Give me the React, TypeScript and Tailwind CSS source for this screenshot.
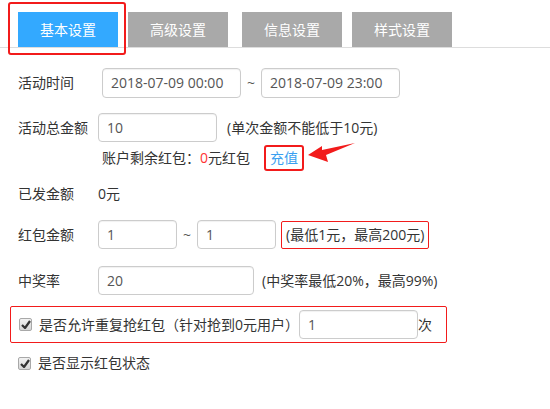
import React from "react"

const font = "font-[family-name:'Open_Sans','Noto_Sans_CJK_SC',sans-serif]"

function Field({ value, w, h = "h-[29px]" }: { value: string; w: string; h?: string }) {
  return (
    <div
      className={`${w} ${h} flex items-center px-[8px] border border-[#ccc] rounded-[4px] bg-white text-[#555] shadow-[inset_0_1px_1px_rgba(0,0,0,0.06)]`}
    >
      {value}
    </div>
  )
}

function Check() {
  return (
    <span className="w-[13px] h-[13px] flex items-center justify-center rounded-[2px] border border-[#a8a8a8] bg-gradient-to-b from-[#f2f2f2] to-[#d6d6d6]">
      <svg width="10" height="9" viewBox="0 0 10 9">
        <path d="M1 5 L4 8 L9 1" fill="none" stroke="#333" strokeWidth="2.2" strokeLinejoin="round" />
      </svg>
    </span>
  )
}

export default function App() {
  const tabs = ["高级设置", "信息设置", "样式设置"]
  return (
    <div className={`relative w-[550px] h-[409px] overflow-hidden bg-white text-[14px] leading-[20px] text-[#333] ${font}`}>
      {/* tabs */}
      <div className="flex h-[48px] items-end border-b border-[#ddd] pl-[18px]">
        <div className="w-[100px] h-[35px] flex items-center justify-center bg-[#33a9ff] text-white text-[14px]">
          基本设置
        </div>
        {tabs.map((t, i) => (
          <div
            key={t}
            className={`w-[100px] h-[35px] flex items-center justify-center bg-[#a9a9a9] text-white text-[14px] ${i === 1 ? "ml-[14px]" : "ml-[10px]"}`}
          >
            {t}
          </div>
        ))}
      </div>
      <div className="absolute left-[8px] top-[2px] w-[118px] h-[53px] border-2 border-[#f21b1b] rounded-[3px]" />

      {/* form */}
      <div className="flex flex-col pl-[18px]">
        <div className="mt-[20px] flex items-center h-[30px]">
          <span className="w-[84px]">活动时间</span>
          <Field value="2018-07-09 00:00" w="w-[139px]" h="h-[30px]" />
          <span className="w-[20px] text-center text-[#555]">~</span>
          <Field value="2018-07-09 23:00" w="w-[139px]" h="h-[30px]" />
        </div>

        <div className="mt-[15px] flex items-center">
          <span className="w-[80px]">活动总金额</span>
          <Field value="10" w="w-[119px]" />
          <span className="ml-[10px]">(单次金额不能低于10元)</span>
        </div>

        <div className="mt-[3px] ml-[84px] flex items-center h-[26px]">
          <span>
            账户剩余红包：<span className="text-[#ff3333]">0</span>元红包
          </span>
          <span className="ml-[14px] h-[26px] px-[4px] flex items-center border-2 border-[#f21b1b] rounded-[3px] text-[#3a9ff0]">
            充值
          </span>
        </div>

        <div className="mt-[13px] flex items-center">
          <span className="w-[80px]">已发金额</span>
          <span>0元</span>
        </div>

        <div className="mt-[16px] flex items-center">
          <span className="w-[80px]">红包金额</span>
          <Field value="1" w="w-[79px]" />
          <span className="w-[20px] text-center text-[#555]">~</span>
          <Field value="1" w="w-[79px]" />
          <span className="ml-[5px] h-[28px] px-[4px] flex items-center border border-[#f21b1b] rounded-[2px]">
            (最低1元，最高200元)
          </span>
        </div>

        <div className="mt-[17px] flex items-center">
          <span className="w-[80px]">中奖率</span>
          <Field value="20" w="w-[156px]" />
          <span className="ml-[8px]">(中奖率最低20%，最高99%)</span>
        </div>
      </div>

      <div className="mt-[11px] ml-[10px] w-[437px] h-[37px] flex items-center border border-[#f21b1b] rounded-[2px] pl-[8px]">
        <Check />
        <span className="ml-[7px]">是否允许重复抢红包（针对抢到0元用户）</span>
        <Field value="1" w="w-[119px]" />
        <span>次</span>
      </div>

      <div className="mt-[10px] ml-[18px] flex items-center">
        <Check />
        <span className="ml-[7px]">是否显示红包状态</span>
      </div>

      {/* annotation arrow */}
      <svg className="absolute left-[306px] top-[141px]" width="50" height="22" viewBox="0 0 50 22">
        <polygon points="2,14 16,5 16,9 49,2 20,14 22,21" fill="#f21b1b" />
      </svg>
    </div>
  )
}
